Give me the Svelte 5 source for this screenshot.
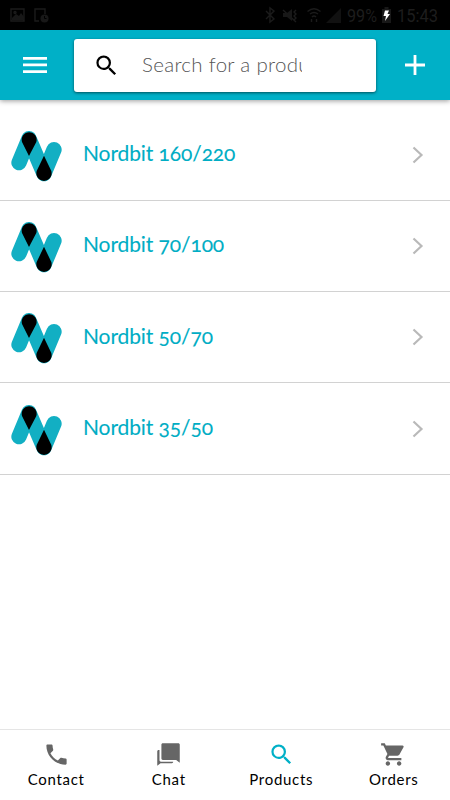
<script>
	let query = '';
	let activeTab = 'Products';

	const products = [
		{ id: 1, name: 'Nordbit 160/220' },
		{ id: 2, name: 'Nordbit 70/100' },
		{ id: 3, name: 'Nordbit 50/70' },
		{ id: 4, name: 'Nordbit 35/50' },
	];

	const searchPath =
		'M15.5 14h-.79l-.28-.27A6.47 6.47 0 0 0 16 9.5 6.5 6.5 0 1 0 9.5 16c1.61 0 3.09-.59 4.23-1.57l.27.28v.79l5 4.99L20.49 19l-4.99-5zm-6 0C7.01 14 5 11.99 5 9.5S7.01 5 9.5 5 14 7.01 14 9.5 11.99 14 9.5 14z';

	const tabs = [
		{
			label: 'Contact',
			path: 'M6.62 10.79c1.44 2.83 3.76 5.14 6.59 6.59l2.2-2.2c.27-.27.67-.36 1.02-.24 1.12.37 2.33.57 3.57.57.55 0 1 .45 1 1V20c0 .55-.45 1-1 1-9.39 0-17-7.61-17-17 0-.55.45-1 1-1h3.5c.55 0 1 .45 1 1 0 1.25.2 2.45.57 3.57.11.35.03.74-.25 1.02l-2.2 2.2z',
		},
		{
			label: 'Chat',
			path: 'M20.600 2H7C6.200 2 5.700 2.500 5.700 3.300v12.200c0 .8.5 1.300 1.300 1.300h11.800l3.200 2.500V3.300C22 2.500 21.400 2 20.600 2zM4 8H3.300C2.500 8 2 8.500 2 9.200V22l2.900-2.300H15c.8 0 1.200-.5 1.200-1.200H5.300c-.8 0-1.300-.5-1.300-1.300z',
		},
		{ label: 'Products', path: searchPath },
		{
			label: 'Orders',
			path: 'M7 18c-1.1 0-1.99.9-1.99 2S5.900 22 7 22s2-.9 2-2-.9-2-2-2zM1 2v2h2l3.600 7.590-1.350 2.450c-.16.28-.25.61-.25.96 0 1.100.9 2 2 2h12v-2H7.420c-.14 0-.25-.11-.25-.25l.03-.12.9-1.630h7.450c.75 0 1.410-.41 1.750-1.030l3.580-6.490A1 1 0 0 0 20.010 4H5.210l-.94-2H1zm16 16c-1.100 0-1.990.9-1.990 2s.89 2 1.990 2 2-.9 2-2-.9-2-2-2z',
		},
	];
</script>

<div class="app">
	<div class="status-bar">
		<svg width="450" height="30" viewBox="0 0 450 30">
			<g class="status-line">
				<path d="M11 9h13v12H11z" />
				<circle cx="15" cy="12.500" r="1" />
				<path d="M39 21h-4V9h10v5" />
				<path d="M266 11l8 8-4 3V8l4 3-8 8" />
				<path d="M283 10l13 12M296 10l-2 2 2 2-2 2 2 2-2 2" />
				<path d="M307.500 11.500q6.500-5.500 13 0M310 14q4-3 8 0M312 17q2-2 4 0M311.500 22v-3M316.500 19v3" />
			</g>
			<circle class="status-fill" cx="44.500" cy="18.500" r="4" />
			<path stroke="#000" fill="none" d="M44.500 16v2.500h2" />
			<path class="status-fill" d="M12 20v-2l4-4 3 2 2-3 3 4v3zM283 13h4l5-4v12l-5-4h-4z" />
			<path fill="#111" d="M341 8v15h-15z" />
			<rect class="status-fill" x="382" y="9" width="9" height="14" />
			<rect class="status-fill" x="384.500" y="7" width="4" height="2" />
			<path fill="#fff" d="M385 10.500h4l-1.500 3.500h2.500l-5 7 1-5h-2.500z" />
			<text x="347" y="22" textLength="30" lengthAdjust="spacingAndGlyphs">99%</text>
			<text x="397" y="22" textLength="41" lengthAdjust="spacingAndGlyphs">15:43</text>
		</svg>
	</div>

	<header>
		<button class="icon-btn" aria-label="Menu">
			<svg width="24" height="16" viewBox="0 0 24 16">
				<path fill="#fff" d="M0 0h24v2.700H0zM0 6.600h24v2.700H0zM0 13.200h24v2.700H0z" />
			</svg>
		</button>
		<label class="search">
			<svg width="27" height="27" viewBox="0 0 24 24"><path d={searchPath} /></svg>
			<input type="text" placeholder="Search for a product" bind:value={query} />
		</label>
		<button class="icon-btn add" aria-label="Add">
			<svg width="20" height="20" viewBox="0 0 20 20">
				<path fill="#fff" d="M8.600 0h2.800v8.600H20v2.800h-8.600V20H8.600v-8.600H0V8.600h8.600z" />
			</svg>
		</button>
	</header>

	<main>
		{#each products as product (product.id)}
			<div class="product">
				<svg class="logo" width="54" height="54" viewBox="0 0 162 162">
					<g class="bars">
						<path d="M57 26L27 98M57 26L102 131M132 59L102 131" />
					</g>
					<path d="M36 36A22.500 22.500 0 1 1 79 36L57 78zM80 123L102 77L124 123A23 23 0 1 1 80 123z" />
				</svg>
				<span class="name">{product.name}</span>
				<svg class="chevron" width="12" height="18" viewBox="0 0 12 18">
					<path d="M1.500 1.500L9.500 9l-8 7.500" />
				</svg>
			</div>
		{/each}
	</main>

	<nav>
		{#each tabs as tab (tab.label)}
			<button
				class="tab"
				class:active={activeTab === tab.label}
				on:click={() => (activeTab = tab.label)}
			>
				<svg width="27" height="27" viewBox="0 0 24 24"><path d={tab.path} /></svg>
				<span>{tab.label}</span>
			</button>
		{/each}
	</nav>
</div>

<style>
	:global(body) {
		margin: 0;
		background: #fff;
	}

	.app {
		display: flex;
		flex-direction: column;
		height: 800px;
		overflow: hidden;
		font-family: Lato, 'Open Sans', sans-serif;
	}

	button {
		border: none;
		background: none;
		padding: 0;
		font-family: inherit;
	}

	svg {
		display: block;
		flex: none;
	}

	.status-bar {
		height: 30px;
		flex: none;
		background: #000;
	}

	.status-bar text {
		font-family: Roboto, sans-serif;
		font-size: 18.5px;
		fill: #1d1d1d;
	}

	.status-line {
		fill: none;
		stroke: #1b1b1b;
		stroke-width: 1.4;
	}

	.status-fill {
		fill: #181818;
	}

	header {
		display: flex;
		align-items: center;
		flex: none;
		height: 70px;
		background: #00b0c7;
		box-shadow: 0 1px 5px rgba(0, 0, 0, 0.4);
	}

	.icon-btn {
		display: flex;
		flex: none;
		width: 74px;
		padding-left: 23px;
	}

	.icon-btn.add {
		padding-left: 28.5px;
	}

	.search {
		display: flex;
		align-items: center;
		width: 303px;
		height: 53px;
		box-sizing: border-box;
		padding-left: 19px;
		border-radius: 3px;
		background: #fff;
		box-shadow: 0 1px 3px rgba(0, 0, 0, 0.55);
	}

	.search input {
		width: 160px;
		height: 40px;
		margin-left: 22px;
		padding: 0 0 2px;
		box-sizing: border-box;
		border: none;
		outline: none;
		background: none;
		font-family: Lato, sans-serif;
		font-size: 20.5px;
		font-weight: 300;
		letter-spacing: 0.3px;
	}

	.search input::placeholder {
		color: #555;
		opacity: 1;
	}

	main {
		flex: 1;
		padding-top: 9.5px;
	}

	.product {
		display: flex;
		align-items: center;
		height: 91.33px;
		box-sizing: border-box;
		padding: 0 26px 0 10px;
		border-bottom: 1px solid #d2d2d2;
	}

	.logo {
		margin-top: 4px;
	}

	.bars {
		fill: none;
		stroke: #12afc3;
		stroke-width: 46;
		stroke-linecap: round;
	}

	.name {
		flex: 1;
		margin-left: 19px;
		padding-bottom: 4px;
		color: #00adc4;
		font-size: 21px;
		font-variant-numeric: oldstyle-nums;
		letter-spacing: -0.1px;
		-webkit-text-stroke: 0.1px #00adc4;
	}

	.chevron {
		fill: none;
		stroke: #b9b9b9;
		stroke-width: 2.2;
	}

	nav {
		display: grid;
		grid-template-columns: repeat(4, 1fr);
		height: 71px;
		flex: none;
		box-sizing: border-box;
		border-top: 1px solid #e5e5e5;
	}

	.tab {
		display: flex;
		flex-direction: column;
		align-items: center;
		gap: 1px;
		padding-top: 11px;
		color: #000;
		font-size: 15px;
		line-height: 20px;
		letter-spacing: 0.7px;
	}

	.tab svg {
		fill: #666;
	}

	.tab.active svg {
		fill: #00b0c7;
	}
</style>
